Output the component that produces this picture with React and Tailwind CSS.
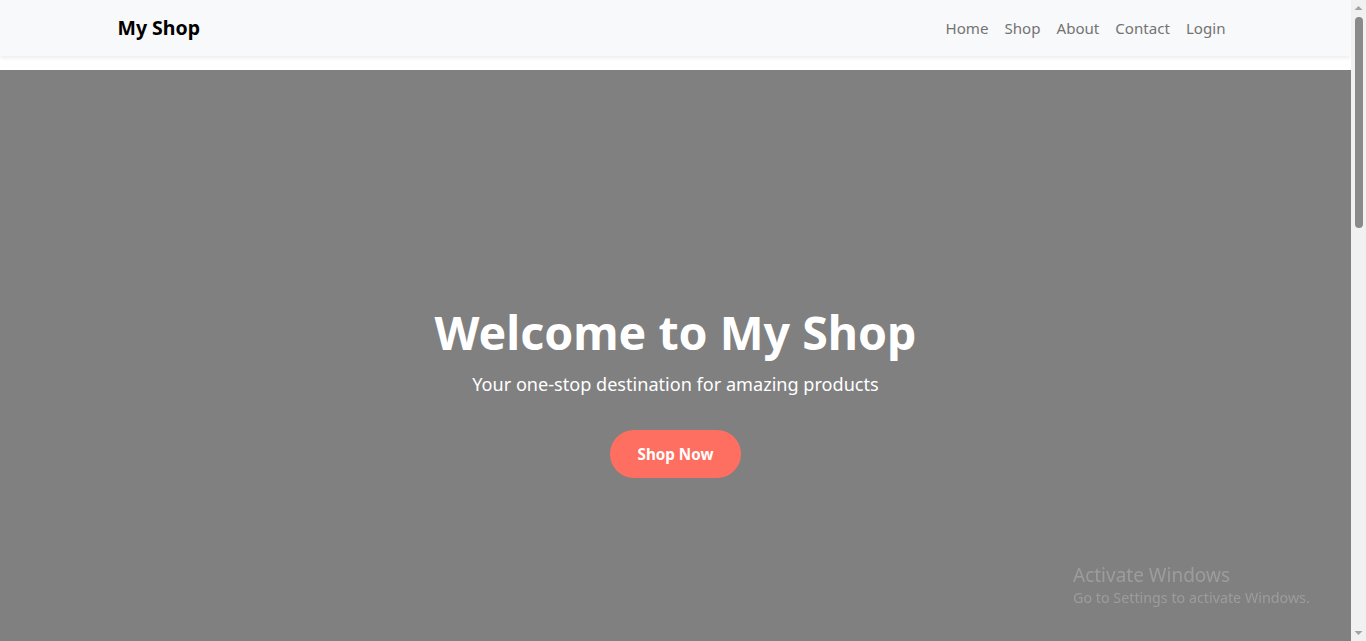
import React from "react";

const links = ["Home", "Shop", "About", "Contact", "Login"];

// fake windows scrollbar, sits over the right edge of the page
const Scrollbar = () => (
  <div className="fixed right-0 top-0 flex h-screen w-[15px] flex-col items-center bg-[#f1f1f1]">
    <svg width="15" height="17" viewBox="0 0 15 17" className="shrink-0">
      <path d="M3.5 10 L7.5 6 L11.5 10 Z" fill="#a3a3a3" />
    </svg>
    <div className="h-[211px] w-[8px] rounded-full bg-[#8a8a8a]" />
    <div className="flex-1" />
    <svg width="15" height="17" viewBox="0 0 15 17" className="shrink-0">
      <path d="M3.5 7 L7.5 11 L11.5 7 Z" fill="#a3a3a3" />
    </svg>
  </div>
);

const App = () => {
  return (
    <div className="min-h-screen bg-white font-['Noto_Sans','Open_Sans',sans-serif]">
      <div className="mr-[15px]">
        <nav className="h-[56px] bg-[#f8f9fa] shadow-[0_2px_4px_rgba(0,0,0,0.075)]">
          <div className="mx-auto flex h-full w-[1140px] max-w-full items-center justify-between px-3">
            <a href="#" className="text-[19.5px] font-bold leading-[30px] text-black">
              My Shop
            </a>
            <ul className="flex items-center">
              {links.map((l) => (
                <li key={l}>
                  <a href="#" className="block px-2 text-[15.1px] leading-6 text-[#737373]">
                    {l}
                  </a>
                </li>
              ))}
            </ul>
          </div>
        </nav>

        <section className="mt-[14px] flex h-screen flex-col items-center justify-center bg-[#808080] text-center text-white">
          <h1 className="text-[46.5px] font-bold leading-[58px]">Welcome to My Shop</h1>
          <p className="mt-2 text-[18.1px] leading-[30px]">
            Your one-stop destination for amazing products
          </p>
          <button className="mt-[31px] h-[48px] w-[131px] rounded-full bg-[#ff6f61] text-[15.2px] font-bold text-white">
            Shop Now
          </button>
        </section>
      </div>

      <Scrollbar />

      {/* windows watermark */}
      <div className="pointer-events-none fixed left-[1073px] top-[562px] text-[#9c9c9c]">
        <div className="text-[19px] leading-[26px]">Activate Windows</div>
        <div className="text-[14.3px] leading-[20px]">Go to Settings to activate Windows.</div>
      </div>
    </div>
  );
};

export default App;
